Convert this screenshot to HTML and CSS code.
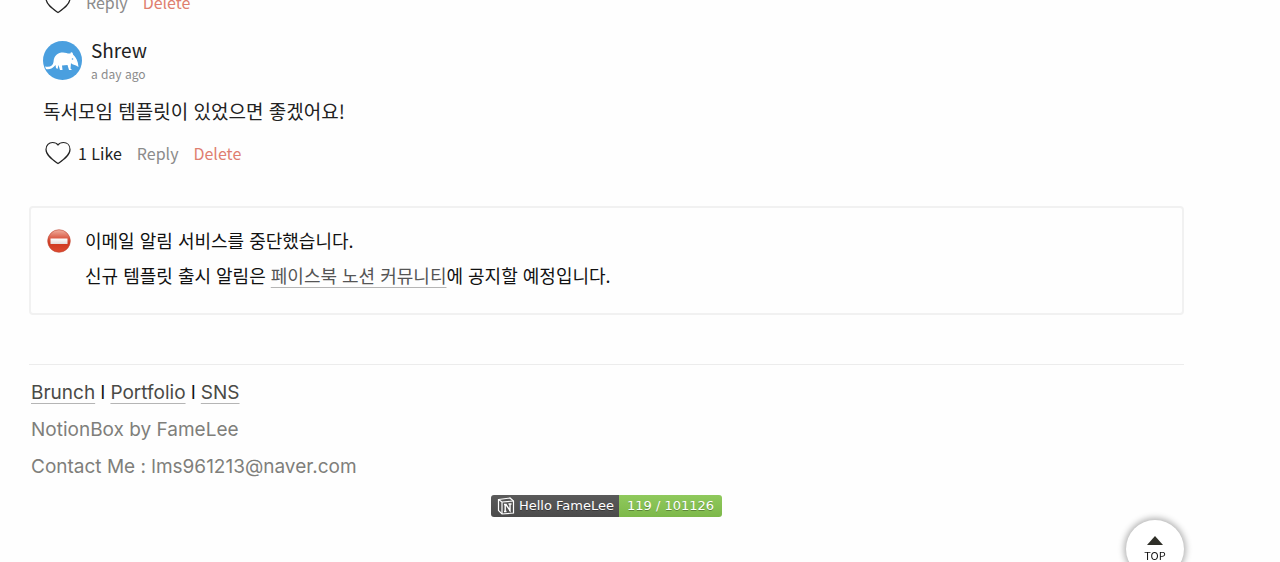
FILE: index.html
```html
<!DOCTYPE html>
<html lang="ko">
<head>
    <meta charset="UTF-8">
    <meta name="viewport" content="width=device-width, initial-scale=1.0">
    <title>NotionBox</title>
    <link rel="stylesheet" href="styles.css">
</head>
<body>

    <main class="page">
        <section class="comments">
            <div class="actions">
                <button class="like" type="button" aria-label="Like">
                    <svg class="heart" viewBox="0 0 26 24"><path d="M13 22.5C8 19 1 14.5 1 8.5C1 4 4 1.500 7.500 1.500C10 1.500 12 2.500 13 4C14 2.500 16 1.500 18.500 1.500C22 1.500 25 4 25 8.500C25 14.500 18 19 13 22.500Z"/></svg>
                </button>
                <button class="reply" type="button">Reply</button>
                <button class="delete" type="button">Delete</button>
            </div>

            <article class="comment">
                <div class="author">
                    <svg class="avatar" viewBox="0 0 39 39">
                        <circle cx="19.5" cy="19.5" r="19.5" fill="#4a9fdf"/>
                        <path d="M2 25.500C7 26.500 10 25 10.500 21C11 14 15 11.500 20 11.500C23 11.500 25 13 27.500 12.500C27.500 10.500 30 11 30 13.500C33 16 35 20 35.500 26L33 24.500C31 23.500 29 23.500 28 22L27.500 27.500L29 29H26L24.500 24L19 24.500L19.500 29H17L15.500 24L14.500 28L13 27L12.500 24C10 27.500 6 29 3 28Z" fill="#fff"/>
                        <circle cx="29.5" cy="18" r="0.8" fill="#4a9fdf"/>
                    </svg>
                    <div>
                        <div class="name">Shrew</div>
                        <div class="time">a day ago</div>
                    </div>
                </div>
                <p class="message">독서모임 템플릿이 있었으면 좋겠어요!</p>
                <div class="actions">
                    <button class="like" type="button">
                        <svg class="heart" viewBox="0 0 26 24"><path d="M13 22.5C8 19 1 14.5 1 8.5C1 4 4 1.500 7.500 1.500C10 1.500 12 2.500 13 4C14 2.500 16 1.500 18.500 1.500C22 1.500 25 4 25 8.500C25 14.500 18 19 13 22.500Z"/></svg>
                        1 Like
                    </button>
                    <button class="reply" type="button">Reply</button>
                    <button class="delete" type="button">Delete</button>
                </div>
            </article>
        </section>

        <aside class="callout">
            <svg class="no-entry" viewBox="0 0 24 24">
                <defs>
                    <linearGradient id="red" x1="0" y1="0" x2="0" y2="1">
                        <stop offset="0" stop-color="#f0b0a0"/>
                        <stop offset="0.4" stop-color="#d9553f"/>
                        <stop offset="0.6" stop-color="#cf3a20"/>
                        <stop offset="1" stop-color="#dd4a30"/>
                    </linearGradient>
                    <linearGradient id="bar" x1="0" y1="0" x2="0" y2="1">
                        <stop offset="0" stop-color="#fff"/>
                        <stop offset="1" stop-color="#e3dcda"/>
                    </linearGradient>
                </defs>
                <circle cx="12" cy="12" r="11.3" fill="url(#red)" stroke="#c0432f" stroke-width="0.6"/>
                <rect x="3.500" y="9.500" width="17" height="5.500" fill="url(#bar)"/>
            </svg>
            <div class="callout-text">
                <p>이메일 알림 서비스를 중단했습니다.</p>
                <p>신규 템플릿 출시 알림은 <a href="#">페이스북 노션 커뮤니티</a>에 공지할 예정입니다.</p>
            </div>
        </aside>

        <footer class="footer">
            <p class="links"><a href="#">Brunch</a> l <a href="#">Portfolio</a> l <a href="#">SNS</a></p>
            <p>NotionBox by FameLee</p>
            <p>Contact Me : lms961213@naver.com</p>
        </footer>

        <div class="badge">
            <span class="badge-label">
                <svg class="notion" viewBox="0 0 18 18" fill="none" stroke="#fff">
                    <path d="M1.500 2.500L13 1L16.500 4V16L5 17L1.500 13.500Z" stroke-width="1.2"/>
                    <path d="M1.500 2.500L5 5V17M5 5L16.500 4" stroke-width="1.2"/>
                    <path d="M7 7.500H9L13 13.500V7M8.200 8V14.500M7 14.500H9.500M11.500 7H14.500M12 13.500H13.500" stroke-width="1.4"/>
                </svg>
                Hello FameLee
            </span>
            <span class="badge-count">119 / 101126</span>
        </div>
    </main>

    <button class="top-btn" type="button">
        <svg class="arrow" viewBox="0 0 16 9"><path d="M8 0L16 9H0Z" fill="#2f2f28"/></svg>
        TOP
    </button>

</body>
</html>
```
FILE: styles.css
```css
* {
    box-sizing: border-box;
}
body {
    margin: 0;
    background-color: #fefefe;
    color: #111;
    font-family: "Noto Sans CJK KR", sans-serif;
    overflow: hidden;
}
p {
    margin: 0;
}
button {
    padding: 0;
    border: none;
    background: none;
    font-family: inherit;
    cursor: pointer;
}
.page {
    margin: -12px 96px 0 29px;
}
.comments {
    padding: 0 14px;
}
.actions {
    display: flex;
    align-items: center;
    gap: 15px;
    height: 28px;
    padding-left: 2px;
}
.actions button {
    font-size: 16px;
    line-height: 28px;
}
.actions .like {
    display: flex;
    align-items: center;
    gap: 7px;
    color: #222;
}
.actions .reply {
    color: #8b8b8b;
}
.actions .delete {
    color: #df7e70;
}
.heart {
    width: 26px;
    height: 24px;
    fill: none;
    stroke: #222;
    stroke-width: 1.2;
}
.comment {
    margin-top: 20px;
}
.author {
    display: flex;
    align-items: center;
    gap: 9px;
    height: 48px;
}
.avatar {
    display: block;
    width: 39px;
    height: 39px;
}
.name {
    color: #222;
    font-size: 19px;
    line-height: 27px;
}
.time {
    color: #8b8b8b;
    font-size: 12px;
    line-height: 22px;
}
.message {
    margin: 12px 0 13px;
    color: #222;
    font-size: 19px;
    line-height: 30px;
}
.callout {
    display: flex;
    gap: 14px;
    margin-top: 39px;
    padding: 15px 16px 20px;
    border: 2px solid #f1f1f1;
    border-radius: 4px;
}
.no-entry {
    flex: none;
    width: 24px;
    height: 24px;
    margin-top: 6px;
}
.callout-text {
    font-size: 18px;
    line-height: 35px;
}
a {
    text-decoration: underline 1px #b5b5b5;
    text-decoration-skip-ink: none;
    text-underline-offset: 4px;
}
.callout a {
    color: #555;
}
.footer {
    margin-top: 49px;
    padding: 9px 2px 0;
    border-top: 1px solid #ececec;
    color: #7f7f7b;
    font-family: Inter, sans-serif;
    font-size: 19px;
    line-height: 37px;
}
.links {
    color: #111;
}
.links a {
    color: #4a4a46;
}
.badge {
    display: flex;
    width: fit-content;
    margin: 10px auto 0;
    border-radius: 3px;
    overflow: hidden;
    color: #fff;
    font-family: "DejaVu Sans", sans-serif;
    font-size: 13px;
    line-height: 22px;
    text-shadow: 0 1px 0 rgba(0, 0, 0, 0.3);
}
.badge-label {
    display: flex;
    align-items: center;
    gap: 4px;
    padding: 0 5px 0 6px;
    background: linear-gradient(#5a5a5a, #4b4b4b);
}
.badge-count {
    padding: 0 8px;
    background: linear-gradient(#8fc95c, #7db84a);
}
.notion {
    width: 18px;
    height: 18px;
}
.top-btn {
    position: fixed;
    right: 96px;
    bottom: -16px;
    display: flex;
    flex-direction: column;
    align-items: center;
    width: 58px;
    height: 58px;
    padding-top: 16px;
    border-radius: 50%;
    background-color: #fff;
    box-shadow: 0 0 6px 2px rgba(0, 0, 0, 0.3);
    color: #111;
    font-size: 11px;
    line-height: 20px;
}
.arrow {
    flex: none;
    width: 16px;
    height: 9px;
}
```
